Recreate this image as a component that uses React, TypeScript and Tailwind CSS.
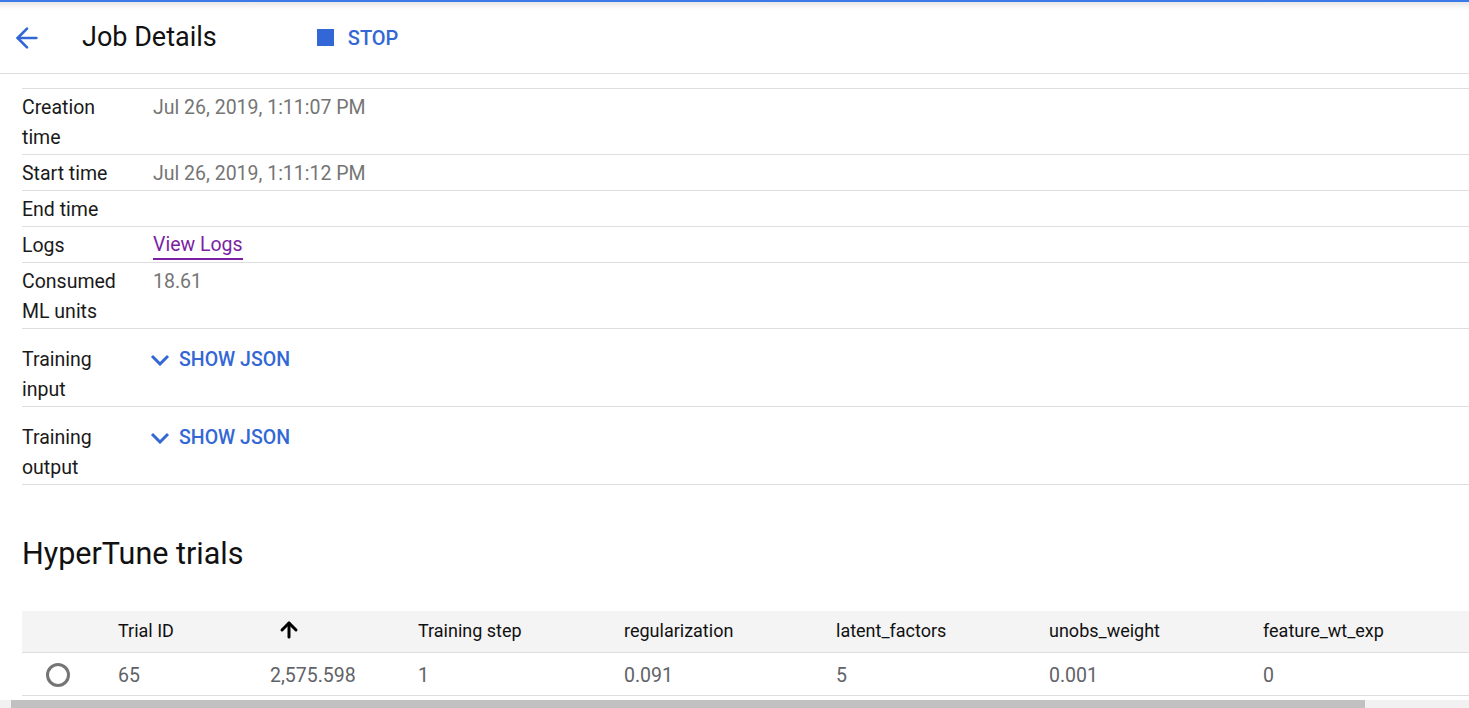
import { ArrowLeft, ArrowUp } from "lucide-react";

const details = [
  { label: ["Creation", "time"], value: "Jul 26, 2019, 1:11:07 PM" },
  { label: ["Start time"], value: "Jul 26, 2019, 1:11:12 PM" },
  { label: ["End time"], value: "" },
];

const columns = [
  "Trial ID",
  "",
  "Training step",
  "regularization",
  "latent_factors",
  "unobs_weight",
  "feature_wt_exp",
];

const row = ["65", "2,575.598", "1", "0.091", "5", "0.001", "0"];

const gridCols = "grid grid-cols-[96px_152px_148px_206px_212px_213px_214px_1fr]";

const ShowJson = () => (
  <button className="flex items-center gap-[9px] text-[#3367d6] font-medium text-[19.5px] leading-[30px]">
    <svg width="20" height="12" viewBox="0 0 20 12" className="-ml-[3px]">
      <path d="M2 2 L10 10 L18 2" fill="none" stroke="currentColor" strokeWidth="3" />
    </svg>
    SHOW JSON
  </button>
);

export default function App() {
  return (
    <div className="relative w-full h-[708px] overflow-hidden bg-white font-['Roboto',sans-serif] text-[#1a1a1a]">
      <div className="h-[2px] bg-[#3b78e7]" />
      <div className="h-[8px] bg-gradient-to-b from-[#e6e6e6] to-white" />

      <header className="flex items-center h-[64px] pb-[8px] border-b border-[#dedede]">
        <button className="ml-[11px] text-[#3367d6]">
          <ArrowLeft size={32} strokeWidth={2} />
        </button>
        <h1 className="ml-[39px] text-[27px] leading-none text-[#111]">Job Details</h1>
        <button className="ml-[100px] flex items-center gap-[14px] text-[#3367d6] text-[20px] font-medium">
          <span className="w-[17px] h-[17px] bg-[#3367d6]" />
          STOP
        </button>
      </header>

      <section className="pl-[22px] pt-[14px]">
        <div className="border-t border-[#dedede]">
          {details.map((d) => (
            <div
              key={d.label.join(" ")}
              className="flex pt-[4px] pb-[1px] border-b border-[#dedede] text-[19.5px] leading-[30px]"
            >
              <div className="w-[131px]">
                {d.label.map((l) => (
                  <div key={l}>{l}</div>
                ))}
              </div>
              <div className="text-[#757575]">{d.value}</div>
            </div>
          ))}
          <div className="flex pt-[4px] pb-[1px] border-b border-[#dedede] text-[19.5px] leading-[30px]">
            <div className="w-[131px]">Logs</div>
            <a className="text-[#7b1fa2] border-b-2 border-[#7b1fa2] leading-[27px] h-[29px]">
              View Logs
            </a>
          </div>
          <div className="flex pt-[4px] pb-[1px] border-b border-[#dedede] text-[19.5px] leading-[30px]">
            <div className="w-[131px]">
              <div>Consumed</div>
              <div>ML units</div>
            </div>
            <div className="text-[#757575]">18.61</div>
          </div>
          <div className="flex items-start pt-[16px] pb-[1px] border-b border-[#dedede] text-[19.5px] leading-[30px]">
            <div className="w-[131px]">
              <div>Training</div>
              <div>input</div>
            </div>
            <ShowJson />
          </div>
          <div className="flex items-start pt-[16px] pb-[1px] border-b border-[#dedede] text-[19.5px] leading-[30px]">
            <div className="w-[131px]">
              <div>Training</div>
              <div>output</div>
            </div>
            <ShowJson />
          </div>
        </div>

        <h2 className="mt-[51px] text-[30.5px] leading-[36px] text-[#111]">HyperTune trials</h2>

        <div className="mt-[39px]">
          <div className={`${gridCols} h-[42px] pt-[3px] items-center bg-[#f4f4f4] border-b border-[#dedede] text-[18px] text-[#111]`}>
            <div />
            {columns.map((c, i) => (
              <div key={i}>
                {c || <ArrowUp size={24} strokeWidth={3} className="ml-[7px] text-black" />}
              </div>
            ))}
            <div />
          </div>
          <div className={`${gridCols} h-[43px] pt-[6px] items-center border-b border-[#dedede] text-[19.5px] text-[#5f6368]`}>
            <div className="flex pl-[24px]">
              <span className="w-[24px] h-[24px] rounded-full border-[3px] border-[#757575]" />
            </div>
            {row.map((v, i) => (
              <div key={i}>{v}</div>
            ))}
            <div />
          </div>
        </div>
      </section>

      <div className="absolute left-0 right-0 bottom-0 h-[8px] bg-[#f1f1f1]">
        <div className="ml-[11px] w-[1354px] h-full bg-[#c1c1c1]" />
      </div>
    </div>
  );
}
